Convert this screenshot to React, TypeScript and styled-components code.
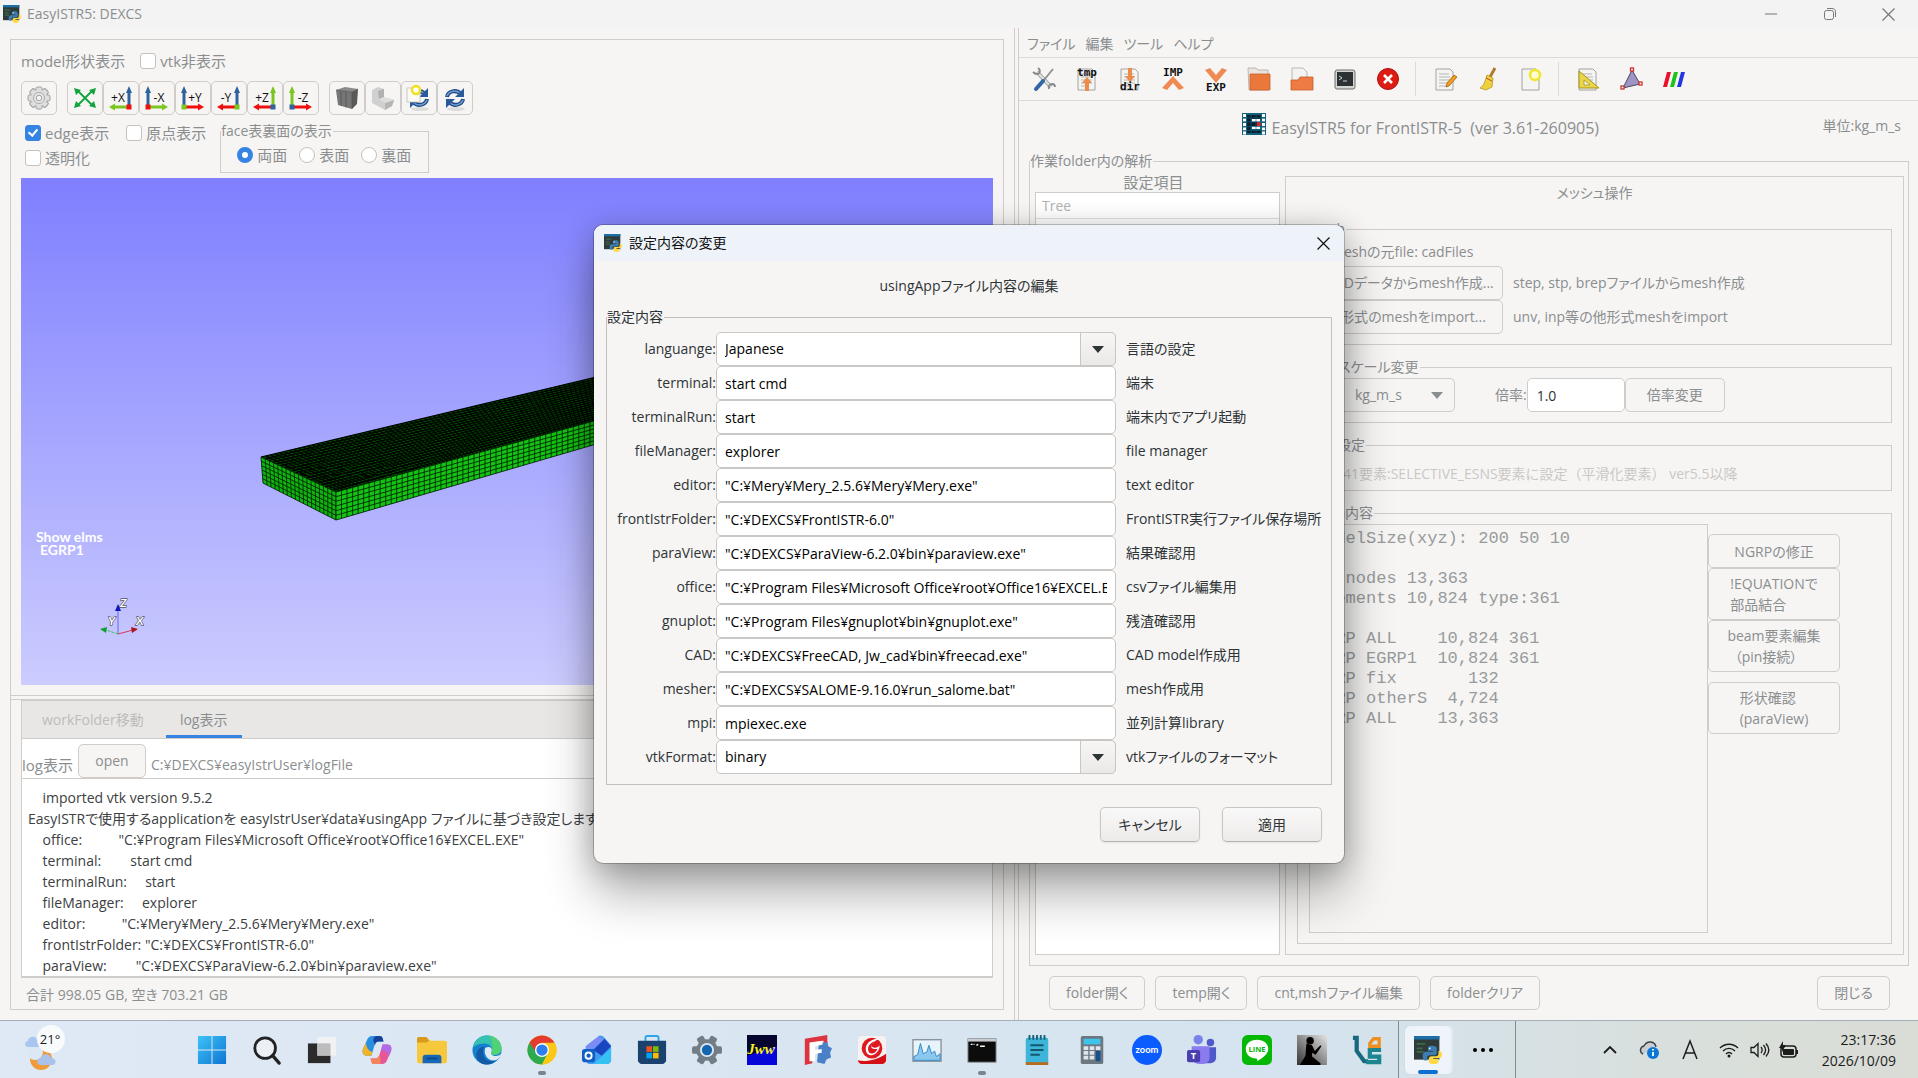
import React from "react";
import styled, { createGlobalStyle, css } from "styled-components";

const line = "#cfccc9";
const muted = "#8b8e8f";
const ink = "#2e3436";

const GlobalStyle = createGlobalStyle`
  *, *::before, *::after { box-sizing: border-box; }
  html, body { margin: 0; }
  body {
    background: #f6f5f4;
    color: ${muted};
    font-family: "Open Sans", "Noto Sans CJK JP", sans-serif;
    font-size: 14px;
    line-height: 20px;
    font-feature-settings: "palt";
    overflow: hidden;
  }
  button, input, select, textarea { font: inherit; color: inherit; font-feature-settings: inherit; }
  svg { display: block; flex: none; overflow: visible; }
`;

/* ---------- window frame ---------- */

const Desktop = styled.div`
  position: relative;
  min-height: 100vh;
  display: flex;
  flex-direction: column;
`;

const TitleBar = styled.header`
  display: flex;
  align-items: center;
  height: 28px;
  padding-left: 3px;
  background: #f3f3f3;
`;

const AppTitle = styled.span`
  flex: 1;
  margin-left: 6px;
`;

const WindowButton = styled.button`
  width: 59px;
  height: 28px;
  padding: 0;
  border: 0;
  background: none;
  display: grid;
  place-items: center;
`;

const Workspace = styled.main`
  flex: 1;
  min-height: 0;
  display: grid;
  grid-template-columns: minmax(0, 1014fr) 5px minmax(0, 899fr);
`;

const Splitter = styled.div`
  border: solid ${line};
  border-width: 0 1px;
`;

const LeftPane = styled.section`
  display: flex;
  padding: 11px 10px 10px;
`;

const ViewerFrame = styled.div`
  flex: 1;
  min-width: 0;
  display: flex;
  flex-direction: column;
  border: 1px solid ${line};
`;

const ViewerTop = styled.div`
  flex: 1;
  display: flex;
  flex-direction: column;
  padding: 11px 10px 10px;
`;

const Row = styled.div`
  display: flex;
  align-items: center;
`;

const ModelRow = styled(Row)`
  gap: 15px;
  font-size: 15px;
`;

const CheckLabel = styled.label`
  display: flex;
  align-items: center;
  gap: 4px;
  font-size: 15px;
  white-space: nowrap;
`;

const Check = styled.input`
  appearance: none;
  position: relative;
  width: 16px;
  height: 16px;
  margin: 0;
  flex: none;
  border: 1px solid #c4c1be;
  border-radius: 3px;
  background: #fff;
  &:checked { background: #3584e4; border-color: #3584e4; }
  &:checked::before {
    content: "";
    position: absolute;
    left: 4px;
    top: 1px;
    width: 6px;
    height: 9px;
    border: solid #fff;
    border-width: 0 2px 2px 0;
    transform: rotate(40deg);
  }
  &:disabled { background: #f6f5f4; }
`;

const Radio = styled(Check)`
  border-radius: 50%;
  &:checked { background: #fff; border: 5px solid #3584e4; }
  &:checked::before { content: none; }
`;

const ToolStrip = styled.div`
  display: flex;
  margin-top: 10px;
`;

const ToolGroup = styled.div`
  display: flex;
  margin-right: 10px;
`;

const ToolButton = styled.button`
  width: 36px;
  height: 34px;
  padding: 0;
  display: grid;
  place-items: center;
  border: 1px solid ${line};
  border-radius: 5px;
  background: #f6f5f4;
`;

const ViewOptions = styled.div`
  display: flex;
  gap: 14px;
  height: 63px;
`;

const CheckGrid = styled.div`
  display: grid;
  grid-template-columns: auto auto;
  grid-auto-rows: 25px;
  align-items: center;
  column-gap: 17px;
  align-content: start;
  padding: 5px 0 0 4px;
`;

const Group = styled.fieldset`
  margin: 0;
  padding: 0;
  min-width: 0;
  border: 1px solid ${line};
`;

const GroupTitle = styled.legend`
  padding: 0 1px 0 0;
  line-height: 20px;
`;

const FaceGroup = styled(Group)`
  width: 209px;
  height: 52px;
  margin-top: 6px;
`;

const FaceChoices = styled.div`
  display: flex;
  gap: 12px;
  padding: 4px 0 0 16px;
`;

const Viewport = styled.div`
  position: relative;
  flex: 1;
  min-height: 200px;
  background: linear-gradient(#7f7fff, #ccccff);
  overflow: hidden;
  & > svg { position: absolute; inset: 0; }
`;

const PaneHandle = styled.div`
  height: 5px;
  border: solid ${line};
  border-width: 1px 0;
`;

const Notebook = styled.div`
  height: 278px;
  margin: 0 10px;
  display: flex;
  flex-direction: column;
  border: 1px solid ${line};
  border-bottom-width: 2px;
  background: #fff;
`;

const Tabs = styled.nav`
  display: flex;
  height: 38px;
  background: #e9e7e6;
  border-bottom: 1px solid ${line};
  padding-left: 8px;
`;

const Tab = styled.button<{ $active?: boolean }>`
  border: 0;
  background: none;
  padding: 3px 12px 0;
  min-width: 76px;
  margin-right: ${(p) => (p.$active ? 0 : 10)}px;
  color: ${(p) => (p.$active ? muted : "#bdbcba")};
  border-bottom: 3px solid ${(p) => (p.$active ? "#3584e4" : "transparent")};
`;

const LogHead = styled.div`
  display: flex;
  align-items: flex-end;
  gap: 5px;
  height: 39px;
`;

const LogText = styled.span`
  line-height: 26px;
`;

const LogLabel = styled(LogText)`
  font-size: 15px;
`;

const button = css`
  height: 34px;
  border: 1px solid ${line};
  border-radius: 5px;
  background: #f6f5f4;
  white-space: nowrap;
`;

const Button = styled.button`
  ${button}
  padding: 0 16px;
`;

const OpenButton = styled(Button)`
  width: 68px;
  padding: 0;
`;

const LogView = styled.pre`
  flex: 1;
  min-height: 0;
  margin: 0;
  border-top: 1px solid ${line};
  padding: 0 6px;
  display: flex;
  flex-direction: column;
  justify-content: flex-end;
  font: inherit;
  line-height: 21px;
  color: #3c4042;
  overflow: hidden;
`;

const Disk = styled.div`
  padding: 7px 15px 3px;
  height: 31px;
`;

/* ---------- right pane ---------- */

const RightPane = styled.section`
  min-width: 0;
  display: flex;
  flex-direction: column;
`;

const MenuBar = styled.nav`
  display: flex;
  gap: 8px;
  height: 30px;
  padding: 3px 7px 0;
  border-bottom: 1px solid #dcdad8;
`;

const MenuButton = styled.button`
  border: 0;
  background: none;
  padding: 0 1px;
`;

const IconBar = styled.div`
  display: flex;
  align-items: center;
  height: 43px;
  padding-left: 3px;
  border-bottom: 1px solid #dcdad8;
`;

const IconButton = styled.button`
  width: 43px;
  height: 40px;
  padding: 0;
  border: 0;
  background: none;
  display: grid;
  place-items: center;
`;

const BarDivider = styled.span`
  width: 1px;
  height: 34px;
  margin: 0 7px 0 6px;
  background: #dcdad8;
`;

const Banner = styled.div`
  display: flex;
  align-items: flex-start;
  height: 50px;
  padding: 12px 17px 0 0;
`;

const BannerTitle = styled.h1`
  flex: 1;
  margin: 0;
  display: flex;
  justify-content: center;
  gap: 5px;
  font-size: 16px;
  font-weight: 500;
  line-height: 30px;
  white-space: pre;
`;

const Unit = styled.span`
  line-height: 26px;
`;

const WorkGroup = styled(Group)`
  flex: 1;
  min-height: 0;
  margin: 0 9px 0 10px;
  display: flex;
  flex-direction: column;
`;

const WorkBody = styled.div`
  flex: 1;
  display: flex;
  gap: 5px;
  padding: 2px 4px 10px 5px;
`;

const TreeColumn = styled.div`
  width: 245px;
  display: flex;
  flex-direction: column;
  text-align: center;
`;

const TreeTitle = styled.span`
  padding-right: 8px;
  font-size: 15px;
  line-height: 19px;
`;

const TreeBox = styled.div`
  flex: 1;
  border: 1px solid ${line};
  background: #fff;
`;

const TreeHead = styled.div`
  padding: 3px 6px 2px;
  text-align: left;
  color: #b3b2b0;
  border-bottom: 1px solid #e2e0de;
`;

const MeshPanel = styled.div`
  flex: 1;
  min-width: 0;
  margin-top: 3px;
  padding: 6px 11px 10px;
  border: 1px solid ${line};
  display: flex;
  flex-direction: column;
  gap: 12px;
`;

const PanelTitle = styled.h2`
  margin: 0 0 4px;
  font-size: 14px;
  font-weight: 400;
  text-align: center;
`;

const MeshSource = styled(Group)`
  padding: 3px 11px 10px;
`;

const SourceLabel = styled.div`
  padding: 0 22px 4px;
`;

const SourceGrid = styled.div`
  display: grid;
  grid-template-columns: 194px 1fr;
  column-gap: 10px;
  align-items: center;
`;

const ScaleGroup = styled(Group)`
  padding: 1px 40px 10px;
`;

const UnitPick = styled.span`
  position: relative;
  margin-right: 40px;
  & > svg { position: absolute; right: 12px; top: 14px; pointer-events: none; }
`;

const UnitSelect = styled.select`
  ${button}
  appearance: none;
  width: 117px;
  padding: 0 16px;
`;

const ScaleInput = styled.input`
  width: 98px;
  height: 34px;
  padding: 0 9px;
  border: 1px solid ${line};
  border-radius: 5px;
  background: #fff;
  color: ${ink};
`;

const ScaleButton = styled(Button)`
  width: 100px;
`;

const ElementGroup = styled(Group)`
  padding: 9px 11px 6px;
`;

const DimLabel = styled(CheckLabel)`
  gap: 10px;
  font-size: 14px;
  font-feature-settings: normal;
  color: #cac8c6;
`;

const ContentGroup = styled(Group)`
  flex: 1;
  padding: 1px 51px 10px 11px;
`;

const ContentBody = styled.div`
  display: flex;
  height: 100%;
`;

const MeshInfo = styled.textarea`
  flex: 1;
  min-width: 0;
  padding: 4px 5px;
  border: 1px solid ${line};
  background: transparent;
  resize: none;
  outline: 0;
  font: 17px/20px "Liberation Mono", monospace;
  color: #989b9c;
`;

const SideButtons = styled.div`
  width: 132px;
  padding-top: 10px;
  display: flex;
  flex-direction: column;
`;

const SideButton = styled.button<{ $tall?: boolean; $spaced?: boolean }>`
  ${button}
  height: ${(p) => (p.$tall ? 52 : 34)}px;
  margin-top: ${(p) => (p.$spaced ? 10 : 0)}px;
  padding: 0;
  line-height: 21px;
  display: grid;
  place-content: center;
  text-align: left;
  white-space: pre;
`;

const Footer = styled.footer`
  display: flex;
  gap: 10px;
  padding: 10px 28px 10px 30px;
`;

const Spacer = styled.span`
  flex: 1;
`;

/* ---------- dialog ---------- */

const Dialog = styled.form`
  position: absolute;
  left: 594px;
  top: 225px;
  width: 750px;
  display: flex;
  flex-direction: column;
  border-radius: 9px;
  background: #f6f5f4;
  color: ${ink};
  box-shadow: 0 0 0 1px rgba(0, 0, 0, 0.22), 0 30px 50px rgba(0, 0, 0, 0.32), 0 4px 28px rgba(0, 0, 0, 0.22);
`;

const DialogBar = styled.div`
  display: flex;
  align-items: center;
  height: 36px;
  padding-left: 10px;
  border-radius: 9px 9px 0 0;
  background: #edf3f9;
  color: #111;
`;

const DialogTitle = styled.span`
  flex: 1;
  margin-left: 7px;
`;

const CloseButton = styled.button`
  width: 42px;
  height: 36px;
  padding: 0;
  border: 0;
  background: none;
  display: grid;
  place-items: center;
`;

const DialogHeading = styled.h2`
  margin: 15px 0 11px;
  font-size: 14px;
  font-weight: 400;
  line-height: 20px;
  text-align: center;
`;

const SettingsGroup = styled(Group)`
  margin: 0 12px;
  padding: 5px 0 10px;
  border-color: #c2bfbc;
`;

const SettingRow = styled.div`
  display: grid;
  grid-template-columns: 109px 400px 1fr;
  align-items: center;
  height: 34px;
`;

const SettingName = styled.label`
  text-align: right;
`;

const field = css`
  width: 100%;
  height: 34px;
  padding: 0 8px;
  border: 1px solid #c9c6c3;
  border-radius: 5px;
  background: #fff;
  color: #000;
`;

const TextField = styled.input`
  ${field}
`;

const Combo = styled.span`
  position: relative;
  display: block;
`;

const ComboSelect = styled.select`
  ${field}
  appearance: none;
`;

const ComboArrow = styled.span`
  position: absolute;
  top: 0;
  right: 0;
  width: 36px;
  height: 34px;
  display: grid;
  place-items: center;
  border: 1px solid #c9c6c3;
  border-radius: 0 5px 5px 0;
  background: linear-gradient(#f7f6f5, #ebe9e8);
  pointer-events: none;
`;

const SettingNote = styled.span`
  padding-left: 10px;
  white-space: nowrap;
`;

const DialogActions = styled.div`
  display: flex;
  justify-content: flex-end;
  gap: 22px;
  padding: 22px 22px 21px;
`;

const ActionButton = styled.button`
  width: 100px;
  height: 35px;
  padding: 0;
  border: 1px solid #c9c6c3;
  border-bottom-color: #b5b2af;
  border-radius: 5px;
  background: linear-gradient(#f9f8f8, #edebea);
  box-shadow: 0 1px 2px rgba(0, 0, 0, 0.08);
`;

/* ---------- taskbar ---------- */

const Taskbar = styled.nav`
  display: flex;
  align-items: stretch;
  height: 58px;
  border-top: 1px solid #a4afb9;
  background: linear-gradient(90deg, #dfe9f5, #d7e5f0 55%, #d4e3ef 68%, #d9dfda 90%, #dadcd6);
  color: #1c1c1c;
`;

const Weather = styled.button`
  width: 184px;
  padding: 0 0 0 24px;
  border: 0;
  background: none;
  text-align: left;
`;

const TaskButton = styled.button<{ $active?: boolean }>`
  position: relative;
  width: 55px;
  padding: 0;
  border: 0;
  background: none;
  display: grid;
  place-items: center;
  ${(p) =>
    p.$active &&
    css`
      width: 46px;
      margin: 5px 0 4px 6px;
      border-radius: 5px;
      background: #eef4fa;
      box-shadow: 2px 0 0 #e2ebf3, 0 0 1px #b8c4ce;
    `}
`;

const RunMark = styled.span<{ $active?: boolean }>`
  position: absolute;
  bottom: ${(p) => (p.$active ? 0 : 3)}px;
  width: ${(p) => (p.$active ? 20 : 8)}px;
  height: 4px;
  border-radius: 2px;
  background: ${(p) => (p.$active ? "#0f6fd0" : "#7d858c")};
`;

const TaskDivider = styled.span`
  width: 1px;
  background: #7f8b95;
`;

const RunningApps = styled.div`
  display: flex;
  margin-left: 4px;
`;

const TrayButton = styled.button<{ $w: number }>`
  width: ${(p) => p.$w}px;
  padding: 0;
  border: 0;
  background: none;
  display: grid;
  place-items: center;
`;

const Clock = styled.time`
  width: 112px;
  padding: 8px 22px 0 0;
  text-align: right;
  line-height: 21px;
`;

/* ---------- drawings ---------- */

const PythonIcon = ({ size = 18 }: { size?: number }) => (
  <svg width={size} height={size} viewBox="0 0 32 32">
    <rect width="29" height="27" fill="#2f3b3b" />
    <rect width="29" height="4" fill="#1d6fa5" />
    <path d="M3 9h10M3 14h7M3 18h8" stroke="#3d6a46" strokeWidth="2" />
    <path d="M20 11c-3 0-4 1-4 3v3h6v1h-8c-3 0-4 2-4 5s1 5 3 5h2v-3c0-2 1-3 3-3h5c2 0 3-1 3-3v-5c0-2-2-3-6-3z" fill="#3d7db3" />
    <path d="M23 32c3 0 5-1 5-3v-3h-6v-1h7c2 0 3-2 3-4s-1-4-3-4h-1v3c0 2-1 3-3 3h-5c-2 0-3 1-3 3v3c0 2 2 3 6 3z" fill="#ffd845" />
    <circle cx="18" cy="14" r="1" fill="#fff" />
  </svg>
);

const GearIcon = () => (
  <svg width="26" height="28" viewBox="0 0 26 28">
    <g fill="#dedede" stroke="#9d9d9d">
      {[0, 45, 90, 135].map((a) => (
        <rect key={a} x="10" y="3" width="6" height="22" rx="1.500" transform={`rotate(${a} 13 14)`} />
      ))}
    </g>
    <circle cx="13" cy="14" r="8.300" fill="#dedede" />
    <circle cx="13" cy="14" r="5.500" fill="#e9e9e9" stroke="#aaa" />
    <circle cx="13" cy="14" r="2.800" fill="#f6f5f4" stroke="#9d9d9d" />
  </svg>
);

const FitIcon = () => (
  <svg width="26" height="26" viewBox="0 0 26 26">
    <path d="M5 5l16 16M21 5L5 21" stroke="#12a33c" strokeWidth="1.800" />
    <path d="M2 3l7 2-5 5zM24 3l-7 2 5 5zM2 23l7-2-5-5zM24 23l-7-2 5-5z" fill="#12a33c" />
  </svg>
);

type Axis = { label: string; right: boolean; v: string; h: string; dot: string };
const blue = "#2f639b";
const lime = "#7ac61e";
const red = "#ee0f0f";

const AxisIcon = ({ label, right, v, h, dot }: Axis) => {
  const cx = right ? 22 : 5;
  const tip = right ? 2 : 25;
  const back = right ? 8 : 19;
  return (
    <svg width="28" height="28" viewBox="0 0 28 28">
      <path d={`M${cx} 23V8`} stroke={v} strokeWidth="3" />
      <path d={`M${cx - 3} 9L${cx} 2l3 7z`} fill={v} />
      <path d={`M${cx} 23H${back}`} stroke={h} strokeWidth="3" />
      <path d={`M${back} 19.500L${tip} 23l${back - tip} 3.500z`} fill={h} />
      <rect x={cx - 2.5} y="20.500" width="5" height="5" fill={dot} />
      <text x={right ? 11 : 16} y="18" textAnchor="middle" fontSize="12" fill="#111">
        {label}
      </text>
    </svg>
  );
};

const axes: Axis[] = [
  { label: "+X", right: true, v: blue, h: lime, dot: red },
  { label: "-X", right: false, v: blue, h: lime, dot: red },
  { label: "+Y", right: false, v: blue, h: red, dot: lime },
  { label: "-Y", right: true, v: blue, h: red, dot: lime },
  { label: "+Z", right: true, v: lime, h: red, dot: blue },
  { label: "-Z", right: false, v: lime, h: red, dot: blue },
];

const CubeIcon = () => (
  <svg width="26" height="26" viewBox="0 0 26 26">
    <path d="M2 5l9-3 13 2-6 3z" fill="#8a8a8a" />
    <path d="M2 5l16 2v17L4 20z" fill="#767676" />
    <path d="M18 7l6-3-1 15-5 5z" fill="#5a5a5a" />
    <path d="M2 5l16 2v17M18 7l6-3M7 6v15M12 6.500v16" stroke="#4a4a4a" strokeWidth=".6" fill="none" />
  </svg>
);

const CutIcon = () => (
  <svg width="26" height="26" viewBox="0 0 26 26">
    <path d="M2 5l6-3 6 2v8l10 3-2 6-7 4L2 18z" fill="#d0d0d0" />
    <path d="M8 6l6-2v8l-5 2z" fill="#b0b0b0" />
    <path d="M15 18l9-3-2 6-7 4z" fill="#b5b5b5" />
    <path d="M9 14l5-2 10 3-9 3z" fill="#dedede" />
  </svg>
);

const ReloadIcon = ({ fresh }: { fresh?: boolean }) => (
  <svg width="26" height="26" viewBox="0 0 26 26">
    <ellipse cx="14" cy="24" rx="9" ry="2" fill="#ddd" />
    <g fill="none" stroke="#204a87" strokeWidth="4">
      <path d="M5 12c1-6 9-8 14-3" />
      <path d="M21 14c-1 6-9 8-14 3" />
    </g>
    <g fill="none" stroke="#6f9dd1" strokeWidth="1.500">
      <path d="M5 11c2-5 9-7 14-2" />
      <path d="M21 15c-2 5-9 7-14 2" />
    </g>
    <path d="M22 3v9h-9zM4 23v-9h9z" fill="#2a5a9a" />
    {fresh && (
      <>
        <path d="M1 3h13v14H1z" fill="#fbfbf4" stroke="#bbb" strokeWidth=".8" />
        <circle cx="10" cy="5" r="4" fill="#fff" stroke="#f0e01a" strokeWidth="2.500" />
      </>
    )}
  </svg>
);

const Sheet = ({ lines = true }: { lines?: boolean }) => (
  <>
    <path d="M3 2h14l3 3v18H3z" fill="#f4f4f2" stroke="#9a9a96" strokeWidth=".9" />
    {lines && <path d="M6 7h10M6 10h11M6 13h11M6 16h11M6 19h8" stroke="#b5b5b1" />}
  </>
);

const MonoTag = ({ y, children }: { y: number; children: string }) => (
  <text x="12" y={y} textAnchor="middle" fontSize="11" fontWeight="700" fontFamily="DejaVu Sans Mono, monospace" fill="#111">
    {children}
  </text>
);

const toolbar: { name: string; art: React.ReactNode }[][] = [
  [
    {
      name: "設定",
      art: (
        <>
          <path d="M5 5l14 15" stroke="#9b9e9c" strokeWidth="4" />
          <path d="M5 5l14 15" stroke="#e4e6e4" strokeWidth="2" />
          <path d="M6 1c3 2 2 6-1 6-2 0-3-1-4-2M17 22c-1-3 1-5 3-5s3 1 3 3" stroke="#85888a" strokeWidth="1.800" fill="none" />
          <path d="M21 2l-9 11" stroke="#8a8d8a" strokeWidth="1.800" />
          <path d="M11 14l-7 8" stroke="#3465a4" strokeWidth="4" strokeLinecap="round" />
        </>
      ),
    },
    {
      name: "temp",
      art: (
        <>
          <Sheet />
          <path d="M12 10l5 6h-3v8h-4v-8H7z" fill="#ee8a4a" />
          <MonoTag y={9}>tmp</MonoTag>
        </>
      ),
    },
    {
      name: "dir",
      art: (
        <>
          <Sheet />
          <path d="M12 15l5-6h-3V1h-4v8H7z" fill="#ee8a4a" />
          <MonoTag y={23}>dir</MonoTag>
        </>
      ),
    },
    {
      name: "import",
      art: (
        <>
          <path d="M1 21L12 9l11 12-5 2-6-7-6 7z" fill="#f08a55" />
          <MonoTag y={9}>IMP</MonoTag>
        </>
      ),
    },
    {
      name: "export",
      art: (
        <>
          <path d="M1 3l5-2 6 7 6-7 5 2-11 13z" fill="#f08a55" />
          <MonoTag y={24}>EXP</MonoTag>
        </>
      ),
    },
    {
      name: "folder",
      art: (
        <>
          <path d="M1 1h8l2 2h10v20H2z" fill="#e9e4df" stroke="#b5a79b" strokeWidth=".8" />
          <path d="M3 7h20v16H3z" fill="#e9783a" stroke="#c4602c" strokeWidth=".8" />
        </>
      ),
    },
    {
      name: "folder-doc",
      art: (
        <>
          <path d="M2 1h11l4 4v11H2z" fill="#f3f3f1" stroke="#a8a8a4" strokeWidth=".8" />
          <path d="M1 23V13h7l2-3h13v13z" fill="#ee7a44" stroke="#c4602c" strokeWidth=".8" />
        </>
      ),
    },
    {
      name: "terminal",
      art: (
        <>
          <rect x="2" y="3" width="20" height="19" rx="2" fill="#d3d7cf" stroke="#6d6f6b" />
          <rect x="4" y="5" width="16" height="14" fill="#2c3133" />
          <path d="M6 9l3 2-3 2M10 14h4" stroke="#cfd4d0" fill="none" />
        </>
      ),
    },
    {
      name: "stop",
      art: (
        <>
          <circle cx="12" cy="12" r="10.500" fill="#dd1c14" stroke="#b00f0a" />
          <path d="M8 8l8 8M16 8l-8 8" stroke="#fff" strokeWidth="2.600" />
        </>
      ),
    },
  ],
  [
    {
      name: "edit",
      art: (
        <>
          <Sheet />
          <path d="M21 8l3 2-8 9-3 1 1-4z" fill="#f59a1e" stroke="#9c6412" strokeWidth=".8" />
        </>
      ),
    },
    {
      name: "clear",
      art: (
        <>
          <path d="M19 1l-5 9" stroke="#b07a2c" strokeWidth="3" />
          <path d="M11 8l6 3-1 9-6 3-6-2c4-2 5-7 7-13z" fill="#ecd03f" stroke="#b89a1c" strokeWidth=".8" />
          <path d="M10 11l6 3" stroke="#b94a3a" />
        </>
      ),
    },
    {
      name: "new",
      art: (
        <>
          <Sheet lines={false} />
          <circle cx="16" cy="8" r="5" fill="#fdfbd0" stroke="#f0e62c" strokeWidth="2.500" />
        </>
      ),
    },
  ],
  [
    {
      name: "measure",
      art: (
        <>
          <Sheet />
          <path d="M3 4l20 17H3z" fill="#e9d54a" stroke="#a8941c" />
          <path d="M8 13l6 5H8z" fill="#f6f5f4" stroke="#a8941c" strokeWidth=".8" />
        </>
      ),
    },
    {
      name: "triangle",
      art: (
        <>
          <path d="M13 3L4 21l17-4z" fill="#9d96c4" stroke="#4b4868" />
          <g fill="#fff" stroke="#c8322a" strokeWidth="1.300">
            <rect x="11.500" y="1" width="3" height="3" />
            <rect x="2" y="19" width="3" height="3" />
            <rect x="20" y="15" width="3" height="3" />
          </g>
        </>
      ),
    },
    {
      name: "paraview",
      art: (
        <>
          <path d="M5 5h4L5 20H1z" fill="#e8122a" />
          <path d="M12 5h4l-4 15H8z" fill="#1fc31f" />
          <path d="M19 5h4l-4 15h-4z" fill="#2438e0" />
        </>
      ),
    },
  ],
];

const LogoIcon = () => (
  <svg width="24" height="22" viewBox="0 0 24 22">
    <rect width="24" height="22" fill="#12627e" />
    <path d="M5 2h14v4H9v3h9v4H9v4h10v3H5z" fill="#0c2130" />
    <g fill="#fff">
      {[1, 5.5, 10, 14.5, 18.5].map((y) => (
        <React.Fragment key={y}>
          <rect x="1" y={y} width="3" height="3" />
          <rect x="20" y={y} width="3" height="3" />
        </React.Fragment>
      ))}
      <rect x="10" y="6" width="8" height="2.500" />
      <rect x="10" y="13.500" width="8" height="2.500" />
    </g>
    <rect x="15" y="9" width="4" height="4" fill="#e02020" />
    <path d="M0 5h24M0 9h24M0 13.500h24M0 17.500h24M4.500 0v22M9 0v22M14 0v22M19 0v22" stroke="#12627e" strokeWidth=".6" />
  </svg>
);

const Arrow = ({ fill = ink }: { fill?: string }) => (
  <svg width="12" height="7" viewBox="0 0 12 7">
    <path d="M0 0h12L6 7z" fill={fill} />
  </svg>
);

const CrossIcon = ({ color }: { color: string }) => (
  <svg width="13" height="13" viewBox="0 0 13 13">
    <path d="M.5.5l12 12M12.500.5l-12 12" stroke={color} strokeWidth="1.200" />
  </svg>
);

/* The solid is drawn from its near end face; each face is ruled with its mesh. */
type P = [number, number];
const mix = (a: P, b: P, t: number): P => [a[0] + (b[0] - a[0]) * t, a[1] + (b[1] - a[1]) * t];
const grid = (a: P, b: P, c: P, d: P, n: number, m: number) => {
  let path = "";
  for (let i = 0; i <= n; i++) {
    const p = mix(a, b, i / n);
    const q = mix(d, c, i / n);
    path += `M${p[0].toFixed(1)} ${p[1].toFixed(1)}L${q[0].toFixed(1)} ${q[1].toFixed(1)}`;
  }
  for (let j = 0; j <= m; j++) {
    const p = mix(a, d, j / m);
    const q = mix(b, c, j / m);
    path += `M${p[0].toFixed(1)} ${p[1].toFixed(1)}L${q[0].toFixed(1)} ${q[1].toFixed(1)}`;
  }
  return path;
};
const poly = (...pts: P[]) => pts.map((p) => p.join(",")).join(" ");
const lt: P = [240, 279];
const ft: P = [315, 314];
const fb: P = [315, 342];
const lb: P = [242, 305];
const bt: P = [613, 190];
const rt: P = [613, 232];
const rb: P = [613, 255];

const ModelView = () => (
  <svg width="100%" height="100%">
    <polygon points={poly(lt, ft, rt, bt)} fill="#004a00" />
    <path d={grid(lt, ft, rt, bt, 20, 80)} stroke="#000" strokeWidth="1.200" />
    <polygon points={poly(lt, ft, fb, lb)} fill="#10b410" />
    <path d={grid(lt, ft, fb, lb, 18, 6)} stroke="#032803" strokeWidth=".9" />
    <polygon points={poly(ft, rt, rb, fb)} fill="#14c414" />
    <path d={grid(ft, rt, rb, fb, 54, 6)} stroke="#032803" strokeWidth=".9" />
    <g fill="#fff" fontFamily="Lato, sans-serif" fontWeight="700" fontSize="14">
      <text x="15" y="364">Show elms</text>
      <text x="19" y="377">EGRP1</text>
    </g>
    <path d="M97 456V432" stroke="#6a6ae8" />
    <path d="M97 426l-3 7h6z" fill="#1212c8" />
    <path d="M97 456l15-4" stroke="#d83a5a" />
    <path d="M117 451l-7-2 1 6z" fill="#b01020" />
    <path d="M97 456l-12-4" stroke="#3ac85a" strokeDasharray="3 1" />
    <path d="M79 451l7-2-1 6z" fill="#10a030" />
    <g fontFamily="Lato, sans-serif" fontWeight="700" fontStyle="italic" fontSize="12" fill="#fff" stroke="#222" strokeWidth="1" paintOrder="stroke">
      <text x="99" y="429">Z</text>
      <text x="87" y="447">Y</text>
      <text x="115" y="447">X</text>
    </g>
  </svg>
);

const Glyph = ({ children, size = 30 }: { children: React.ReactNode; size?: number }) => (
  <svg width={size} height={size} viewBox="0 0 32 32">
    {children}
  </svg>
);

const tasks: { name: string; run?: boolean; art: React.ReactNode }[] = [
  {
    name: "スタート",
    art: (
      <>
        <defs>
          <linearGradient id="win" x1="0" y1="0" x2="1" y2="1">
            <stop offset="0" stopColor="#3cc4f6" />
            <stop offset="1" stopColor="#0f74d4" />
          </linearGradient>
        </defs>
        <path d="M1 1h14.500v14.500H1zM16.500 1H31v14.500H16.500zM1 16.500h14.500V31H1zM16.500 16.500H31V31H16.500z" fill="url(#win)" />
      </>
    ),
  },
  {
    name: "検索",
    art: (
      <>
        <circle cx="14" cy="14" r="11" fill="#eaf0f5" stroke="#222" strokeWidth="3" />
        <path d="M22 22l7 8" stroke="#222" strokeWidth="3.500" strokeLinecap="round" />
      </>
    ),
  },
  {
    name: "タスクビュー",
    art: (
      <>
        <path d="M1 9h24v21H1z" fill="#2b2b2b" />
        <path d="M11 2h20v20H11z" fill="#f3f3f3" opacity=".88" />
        <path d="M11 9h14v13H11z" fill="#bdbdbd" />
      </>
    ),
  },
  {
    name: "Copilot",
    art: (
      <>
        <path d="M11 1h8c3 0 3 3 4 6h-5c-3 0-4 2-5 5l-3 10H5c-4 0-5-3-4-7l4-9c1-3 3-5 6-5z" fill="#2a8fe0" />
        <path d="M19 1c3 0 3 3 4 6h-5c-3 0-4 2-4 4L12 6c0-3 2-5 4-5z" fill="#173f9c" />
        <path d="M1 15l3-7c1 6 3 9 7 10l-1 4H5c-4 0-5-3-4-7z" fill="#f0b429" />
        <path d="M21 31h-8c-3 0-3-3-4-6h5c3 0 4-2 5-5l3-10h5c4 0 5 3 4 7l-4 9c-1 3-3 5-6 5z" fill="#e8569a" />
        <path d="M22 10h5c4 0 5 3 4 7l-2 5c-3-6-6-6-9-5z" fill="#b06be8" />
        <path d="M9 25h5c3 0 4-2 5-5l1 11h-7c-3 0-3-3-4-6z" fill="#f4845a" />
      </>
    ),
  },
  {
    name: "エクスプローラー",
    art: (
      <>
        <path d="M0 4c0-1 1-2 2-2h8l4 4h16c1 0 2 1 2 2v20c0 1-1 2-2 2H2c-1 0-2-1-2-2z" fill="#f8c83c" />
        <path d="M0 4c0-1 1-2 2-2h8l3 4-3 2H0z" fill="#d89a1c" />
        <path d="M6 30v-6c0-2 1-3 3-3h14c2 0 3 1 3 3v6z" fill="#1667b5" />
        <path d="M10 25h12" stroke="#0d4a8a" strokeWidth="2" />
      </>
    ),
  },
  {
    name: "Edge",
    art: (
      <>
        <circle cx="16" cy="16" r="15.500" fill="#1680d0" />
        <path d="M1 13C3 5 9 0 17 .500 26 1 32 8 31.500 15c-.5 5-5 7-9 6-3-1-2-3-1-5 0-4-4-7-8-7-5 0-9 1-12 4z" fill="#35c2b0" />
        <path d="M17 .500C26 1 32 8 31.500 15c-.5 5-5 7-9 6-3-1-2-3-1-5C23 9 21 3 17 .500z" fill="#5cd95c" opacity=".7" />
        <path d="M12 19c0 7 6 11 14 8-4 5-12 6-18 2C2 23 4 14 13 12c-1 2-1 4-1 7z" fill="#125aa5" />
        <path d="M14 14c4-3 8 0 7 3-1 2-1 4 2 5 3 1 6 0 8-2 0 3-3 6-6 7-8 1-13-6-11-13z" fill="#dfeaf4" />
      </>
    ),
  },
  {
    name: "Chrome",
    run: true,
    art: (
      <>
        <circle cx="16" cy="16" r="15.500" fill="#f9c513" />
        <path d="M2.600 8.200A15.500 15.500 0 0 1 29.400 8.200L16 9l-6.500 11z" fill="#e33b2e" />
        <path d="M2.600 8.200A15.500 15.500 0 0 0 16 31.500L22 20l-12-1z" fill="#2da94f" />
        <path d="M16 31.500A15.500 15.500 0 0 0 29.400 8.200H16l6 12z" fill="#fbc816" />
        <circle cx="16" cy="16" r="7.500" fill="#fff" />
        <circle cx="16" cy="16" r="6" fill="#2d7ff0" />
      </>
    ),
  },
  {
    name: "Outlook",
    art: (
      <>
        <path d="M4 12L18 1c2-1 4 0 6 2l7 8v16c0 2-2 4-4 4H8c-2 0-4-2-4-4z" fill="#3f9cf2" />
        <path d="M4 12L18 1l5 4L8 18z" fill="#7d8cf5" />
        <path d="M12 16L24 4l7 8-10 10z" fill="#1a45c0" />
        <path d="M31 14v13c0 2-2 4-4 4H12z" fill="#35c1f4" />
        <rect y="15" width="14" height="14" rx="3" fill="#0f5fc4" />
        <circle cx="7" cy="22" r="3.300" fill="none" stroke="#fff" strokeWidth="2" />
      </>
    ),
  },
  {
    name: "Store",
    art: (
      <>
        <path d="M9 8V3c0-1 1-2 2-2h10c1 0 2 1 2 2v5" fill="none" stroke="#2ba5e8" strokeWidth="2" />
        <path d="M1 6h30v21c0 2-2 4-4 4H5c-2 0-4-2-4-4z" fill="#1b426e" />
        <path d="M10 12h6v6h-6z" fill="#f25022" />
        <path d="M17 12h6v6h-6z" fill="#7fba00" />
        <path d="M10 19h6v6h-6z" fill="#00a4ef" />
        <path d="M17 19h6v6h-6z" fill="#ffb900" />
      </>
    ),
  },
  {
    name: "設定",
    art: (
      <>
        {[30, 90, 150].map((a) => (
          <rect key={a} x="12" y="0" width="8" height="32" rx="2" fill="#737d87" transform={`rotate(${a} 16 16)`} />
        ))}
        <circle cx="16" cy="16" r="11.500" fill="#737d87" />
        <circle cx="16" cy="16" r="7.500" fill="#dfe8f0" />
        <circle cx="16" cy="16" r="5.500" fill="#1267b0" />
      </>
    ),
  },
  {
    name: "Jww",
    art: (
      <>
        <rect width="32" height="32" fill="#0606d8" />
        <path d="M0 0h32v12L0 22z" fill="#050530" />
        <text x="15" y="20" textAnchor="middle" fontSize="16" fontWeight="700" fontStyle="italic" fontFamily="Liberation Serif, serif" fill="#f6f01c">
          Jww
        </text>
      </>
    ),
  },
  {
    name: "FreeCAD",
    art: (
      <>
        <path d="M18 9l9-2 1 5 4 2-2 5 1 5-5 2-2 5-8-2z" fill="#4a80c8" />
        <path d="M3 4l24-4v8h-4V6L11 8v22l-8 2z" fill="#dd3540" />
        <path d="M8 8l14-2v4l-8 2v4l7-1v4l-7 1v8H8z" fill="#fff" />
      </>
    ),
  },
  {
    name: "ウイルスバスター",
    art: (
      <>
        <rect x="1" y="1" width="30" height="30" rx="4" fill="#f6f2f1" />
        <path d="M1 27c8 2 20 0 30-7v7c0 2-2 4-4 4H5c-2 0-4-2-4-4z" fill="#d40f16" />
        <circle cx="16" cy="14" r="11" fill="#dc1a20" />
        <path d="M11 20C6 11 14 3 25 4c-8 2-12 8-8 9 5 2 7-2 7-2 1 6-7 14-13 9z" fill="#fff" />
        <path d="M13 19c-3-5 0-10 5-12-3 4-4 7 0 8 2 0 4 0 4-1-1 4-5 7-9 5z" fill="#dc1a20" />
      </>
    ),
  },
  {
    name: "モニター",
    art: (
      <>
        <rect x="1" y="5" width="30" height="23" fill="#e8f4fc" stroke="#8d959c" strokeWidth="1.500" />
        <path d="M2 23l4-2 3-12 3 11 4-2 2-7 3 9 3-3 2 6 4-3v7H2z" fill="#8cc8ee" stroke="#2f86c4" />
      </>
    ),
  },
  {
    name: "cmd",
    run: true,
    art: (
      <>
        <rect x="1" y="4" width="30" height="25" fill="#0c0c0c" stroke="#8a8f94" />
        <rect x="1" y="4" width="30" height="3" fill="#c8ccd0" />
        <path d="M4 10h2M7 10h1M10 11l2-1M14 12h5" stroke="#fff" strokeWidth="1.500" />
      </>
    ),
  },
  {
    name: "メモ帳",
    art: (
      <>
        <rect x="4" y="3" width="24" height="28" rx="2" fill="#3db4d8" />
        <path d="M4 29h24v3H4z" fill="#b96a1c" />
        <path d="M9 11h14M9 16h14M9 21h10" stroke="#12586e" strokeWidth="2.200" />
        <path d="M8 0v5M12 0v5M16 0v5M20 0v5M24 0v5" stroke="#155f78" strokeWidth="2" />
      </>
    ),
  },
  {
    name: "電卓",
    art: (
      <>
        <rect x="4" y="1" width="24" height="30" rx="2" fill="#6d7780" />
        <rect x="7" y="4" width="18" height="6" fill="#3ec3ea" />
        {[12, 17, 22].map((y) => (
          <path key={y} d={`M7 ${y}h5v4H7zM13.500 ${y}h5v4h-5z`} fill="#dfe5ea" />
        ))}
        <path d="M20 12h5v4h-5z" fill="#dfe5ea" />
        <path d="M20 17h5v11h-5z" fill="#17508c" />
      </>
    ),
  },
  {
    name: "zoom",
    art: (
      <>
        <circle cx="16" cy="16" r="16" fill="#0b5cff" />
        <text x="16" y="19" textAnchor="middle" fontSize="10" fontWeight="700" fontFamily="Lato, sans-serif" fill="#fff">
          zoom
        </text>
      </>
    ),
  },
  {
    name: "Teams",
    art: (
      <>
        <circle cx="12" cy="5" r="5" fill="#7b83eb" />
        <circle cx="25" cy="8" r="4" fill="#5059c9" />
        <path d="M18 13h13v11c0 4-3 6-6 6h-7z" fill="#5059c9" />
        <path d="M5 12h19v12c0 5-4 7-9 7s-10-2-10-7z" fill="#8b7bf0" />
        <rect y="16" width="14" height="13" rx="2" fill="#4a3fb0" />
        <text x="7" y="26" textAnchor="middle" fontSize="10" fontWeight="700" fill="#fff">
          T
        </text>
      </>
    ),
  },
  {
    name: "LINE",
    art: (
      <>
        <rect width="32" height="32" rx="6" fill="#06b806" />
        <path d="M16 5c7 0 12 4 12 10 0 5-6 10-12 13 1-2 0-3-1-3C9 25 4 21 4 15S9 5 16 5z" fill="#fff" />
        <text x="16" y="18" textAnchor="middle" fontSize="8" fontWeight="700" fill="#06b806">
          LINE
        </text>
      </>
    ),
  },
  {
    name: "リーダー",
    art: (
      <>
        <defs>
          <linearGradient id="read" x1="0" y1="1" x2="1" y2="0">
            <stop offset="0" stopColor="#333" />
            <stop offset="1" stopColor="#e4e4e4" />
          </linearGradient>
        </defs>
        <rect width="32" height="32" fill="url(#read)" />
        <circle cx="14" cy="6" r="4" fill="#000" />
        <path d="M10 9l6 2 3 6 6-6 1 1-6 9-4-2v4l9 7v2H3l6-10z" fill="#000" />
      </>
    ),
  },
  {
    name: "VB",
    art: (
      <g fill="none" strokeWidth="4.500">
        <path d="M1 3h4v14l8 11h4" stroke="#16697f" />
        <path d="M31 16H19v7h10v6H15" stroke="#1d8590" />
        <path d="M19 14V9l4-5h6v8H19" stroke="#f09020" strokeWidth="3.500" />
      </g>
    ),
  },
];

/* ---------- content ---------- */

const logLines = [
  "    imported vtk version 9.5.2",
  "EasyISTRで使用するapplicationを easyIstrUser¥data¥usingApp ファイルに基づき設定します。",
  '    office:          "C:¥Program Files¥Microsoft Office¥root¥Office16¥EXCEL.EXE"',
  "    terminal:        start cmd",
  "    terminalRun:     start",
  "    fileManager:     explorer",
  '    editor:          "C:¥Mery¥Mery_2.5.6¥Mery¥Mery.exe"',
  '    frontIstrFolder: "C:¥DEXCS¥FrontISTR-6.0"',
  '    paraView:        "C:¥DEXCS¥ParaView-6.2.0¥bin¥paraview.exe"',
];

const meshInfo = `modelSize(xyz): 200 50 10

   nodes 13,363
elements 10,824 type:361

EGRP ALL    10,824 361
EGRP EGRP1  10,824 361
NGRP fix       132
NGRP otherS  4,724
NGRP ALL    13,363`;

const settings: { id: string; value: string; note: string; combo?: boolean }[] = [
  { id: "languange", value: "Japanese", note: "言語の設定", combo: true },
  { id: "terminal", value: "start cmd", note: "端末" },
  { id: "terminalRun", value: "start", note: "端末内でアプリ起動" },
  { id: "fileManager", value: "explorer", note: "file manager" },
  { id: "editor", value: '"C:¥Mery¥Mery_2.5.6¥Mery¥Mery.exe"', note: "text editor" },
  { id: "frontIstrFolder", value: '"C:¥DEXCS¥FrontISTR-6.0"', note: "FrontISTR実行ファイル保存場所" },
  { id: "paraView", value: '"C:¥DEXCS¥ParaView-6.2.0¥bin¥paraview.exe"', note: "結果確認用" },
  { id: "office", value: '"C:¥Program Files¥Microsoft Office¥root¥Office16¥EXCEL.EXE"', note: "csvファイル編集用" },
  { id: "gnuplot", value: '"C:¥Program Files¥gnuplot¥bin¥gnuplot.exe"', note: "残渣確認用" },
  { id: "CAD", value: '"C:¥DEXCS¥FreeCAD, Jw_cad¥bin¥freecad.exe"', note: "CAD model作成用" },
  { id: "mesher", value: '"C:¥DEXCS¥SALOME-9.16.0¥run_salome.bat"', note: "mesh作成用" },
  { id: "mpi", value: "mpiexec.exe", note: "並列計算library" },
  { id: "vtkFormat", value: "binary", note: "vtkファイルのフォーマット", combo: true },
];

const Viewer = () => (
  <LeftPane>
    <ViewerFrame>
      <ViewerTop>
        <ModelRow>
          <span>model形状表示</span>
          <CheckLabel>
            <Check type="checkbox" />
            vtk非表示
          </CheckLabel>
        </ModelRow>
        <ToolStrip>
          <ToolGroup>
            <ToolButton aria-label="設定"><GearIcon /></ToolButton>
          </ToolGroup>
          <ToolGroup>
            <ToolButton aria-label="全体表示"><FitIcon /></ToolButton>
            {axes.map((a) => (
              <ToolButton key={a.label} aria-label={a.label}><AxisIcon {...a} /></ToolButton>
            ))}
          </ToolGroup>
          <ToolGroup>
            <ToolButton aria-label="立体"><CubeIcon /></ToolButton>
            <ToolButton aria-label="断面"><CutIcon /></ToolButton>
            <ToolButton aria-label="新規読込"><ReloadIcon fresh /></ToolButton>
            <ToolButton aria-label="再読込"><ReloadIcon /></ToolButton>
          </ToolGroup>
        </ToolStrip>
        <ViewOptions>
          <CheckGrid>
            <CheckLabel><Check type="checkbox" defaultChecked />edge表示</CheckLabel>
            <CheckLabel><Check type="checkbox" />原点表示</CheckLabel>
            <CheckLabel><Check type="checkbox" />透明化</CheckLabel>
          </CheckGrid>
          <FaceGroup>
            <GroupTitle>face表裏面の表示</GroupTitle>
            <FaceChoices>
              <CheckLabel><Radio type="radio" name="face" defaultChecked />両面</CheckLabel>
              <CheckLabel><Radio type="radio" name="face" />表面</CheckLabel>
              <CheckLabel><Radio type="radio" name="face" />裏面</CheckLabel>
            </FaceChoices>
          </FaceGroup>
        </ViewOptions>
        <Viewport><ModelView /></Viewport>
      </ViewerTop>
      <PaneHandle />
      <Notebook>
        <Tabs>
          <Tab type="button">workFolder移動</Tab>
          <Tab type="button" $active>log表示</Tab>
        </Tabs>
        <LogHead>
          <LogLabel>log表示</LogLabel>
          <OpenButton type="button">open</OpenButton>
          <LogText>C:¥DEXCS¥easyIstrUser¥logFile</LogText>
        </LogHead>
        <LogView>
          {logLines.map((l) => (
            <div key={l}>{l}</div>
          ))}
        </LogView>
      </Notebook>
      <Disk>合計 998.05 GB, 空き 703.21 GB</Disk>
    </ViewerFrame>
  </LeftPane>
);

const Analysis = () => (
  <RightPane>
    <MenuBar>
      {["ファイル", "編集", "ツール", "ヘルプ"].map((m) => (
        <MenuButton key={m}>{m}</MenuButton>
      ))}
    </MenuBar>
    <IconBar>
      {toolbar.map((group, i) => (
        <React.Fragment key={i}>
          {i > 0 && <BarDivider />}
          {group.map((t) => (
            <IconButton key={t.name} aria-label={t.name}>
              <svg width="24" height="24" viewBox="0 0 24 24">{t.art}</svg>
            </IconButton>
          ))}
        </React.Fragment>
      ))}
    </IconBar>
    <Banner>
      <BannerTitle><LogoIcon />{"EasyISTR5 for FrontISTR-5  (ver 3.61-260905)"}</BannerTitle>
      <Unit>単位:kg_m_s</Unit>
    </Banner>
    <WorkGroup>
      <GroupTitle>作業folder内の解析</GroupTitle>
      <WorkBody>
        <TreeColumn>
          <TreeTitle>設定項目</TreeTitle>
          <TreeBox><TreeHead>Tree</TreeHead></TreeBox>
        </TreeColumn>
        <MeshPanel>
          <PanelTitle>メッシュ操作</PanelTitle>
          <MeshSource>
            <GroupTitle>mesh</GroupTitle>
            <SourceLabel>meshの元file: cadFiles</SourceLabel>
            <SourceGrid>
              <Button>CADデータからmesh作成...</Button>
              <span>step, stp, brepファイルからmesh作成</span>
              <Button>他形式のmeshをimport...</Button>
              <span>unv, inp等の他形式meshをimport</span>
            </SourceGrid>
          </MeshSource>
          <ScaleGroup>
            <GroupTitle>スケール変更</GroupTitle>
            <Row>
              <UnitPick>
                <UnitSelect aria-label="単位"><option>kg_m_s</option></UnitSelect>
                <Arrow fill={muted} />
              </UnitPick>
              <label htmlFor="scale">倍率:</label>
              <ScaleInput id="scale" defaultValue="1.0" />
              <ScaleButton>倍率変更</ScaleButton>
            </Row>
          </ScaleGroup>
          <ElementGroup>
            <GroupTitle>要素設定</GroupTitle>
            <DimLabel><Check type="checkbox" disabled />341要素:SELECTIVE_ESNS要素に設定（平滑化要素） ver5.5以降</DimLabel>
          </ElementGroup>
          <ContentGroup>
            <GroupTitle>mesh内容</GroupTitle>
            <ContentBody>
              <MeshInfo aria-label="mesh内容" readOnly value={meshInfo} />
              <SideButtons>
                <SideButton>NGRPの修正</SideButton>
                <SideButton $tall>{"!EQUATIONで\n部品結合"}</SideButton>
                <SideButton $tall>{"beam要素編集\n  （pin接続）"}</SideButton>
                <SideButton $tall $spaced>{"形状確認\n(paraView)"}</SideButton>
              </SideButtons>
            </ContentBody>
          </ContentGroup>
        </MeshPanel>
      </WorkBody>
    </WorkGroup>
    <Footer>
      <Button>folder開く</Button>
      <Button>temp開く</Button>
      <Button>cnt,mshファイル編集</Button>
      <Button>folderクリア</Button>
      <Spacer />
      <Button>閉じる</Button>
    </Footer>
  </RightPane>
);

const SettingsDialog = () => (
  <Dialog role="dialog" aria-label="設定内容の変更">
    <DialogBar>
      <PythonIcon />
      <DialogTitle>設定内容の変更</DialogTitle>
      <CloseButton type="button" aria-label="閉じる"><CrossIcon color="#111" /></CloseButton>
    </DialogBar>
    <DialogHeading>usingAppファイル内容の編集</DialogHeading>
    <SettingsGroup>
      <GroupTitle>設定内容</GroupTitle>
      {settings.map((s) => (
        <SettingRow key={s.id}>
          <SettingName htmlFor={s.id}>{s.id}:</SettingName>
          {s.combo ? (
            <Combo>
              <ComboSelect id={s.id}><option>{s.value}</option></ComboSelect>
              <ComboArrow><Arrow /></ComboArrow>
            </Combo>
          ) : (
            <TextField id={s.id} defaultValue={s.value} />
          )}
          <SettingNote>{s.note}</SettingNote>
        </SettingRow>
      ))}
    </SettingsGroup>
    <DialogActions>
      <ActionButton type="button">キャンセル</ActionButton>
      <ActionButton type="button">適用</ActionButton>
    </DialogActions>
  </Dialog>
);

const WindowsTaskbar = () => (
  <Taskbar>
    <Weather aria-label="天気">
      <svg width="44" height="46" viewBox="0 0 44 46">
        <circle cx="17" cy="32" r="11" fill="#f09a3a" />
        <circle cx="11" cy="25" r="8" fill="#dce8f4" />
        <path d="M4 20c-4 0-4-6 0-6 0-5 8-6 9-1 5 0 5 7 0 7z" fill="#a9c6f0" />
        <path d="M17 38c-5 0-5-7 0-7 1-5 9-5 10 0 6 0 6 7 1 7z" fill="#a9c2ec" />
        <circle cx="27" cy="12" r="14" fill="#f8fafc" />
        <text x="26" y="17" textAnchor="middle" fontSize="13" fill="#1c1c1c">21°</text>
      </svg>
    </Weather>
    {tasks.map((t) => (
      <TaskButton key={t.name} aria-label={t.name}>
        <Glyph>{t.art}</Glyph>
        {t.run && <RunMark />}
      </TaskButton>
    ))}
    <RunningApps>
      <TaskDivider />
      <TaskButton $active aria-label="EasyISTR">
        <PythonIcon size={28} />
        <RunMark $active />
      </TaskButton>
      <TrayButton $w={64} aria-label="その他">
        <svg width="20" height="4" viewBox="0 0 20 4">
          <circle cx="2" cy="2" r="2" /><circle cx="10" cy="2" r="2" /><circle cx="18" cy="2" r="2" />
        </svg>
      </TrayButton>
      <TaskDivider />
    </RunningApps>
    <Spacer />
    <TrayButton $w={40} aria-label="隠れているインジケーター">
      <svg width="14" height="9" viewBox="0 0 14 9"><path d="M1 8l6-6 6 6" fill="none" stroke="#1c1c1c" strokeWidth="1.800" /></svg>
    </TrayButton>
    <TrayButton $w={40} aria-label="OneDrive">
      <svg width="22" height="22" viewBox="0 0 22 22">
        <path d="M4 15c-4-2-3-7 1-8 3-6 11-5 12 1" fill="#c9ccd0" stroke="#3d4144" strokeWidth="1.400" />
        <circle cx="14" cy="14" r="6" fill="#0a78d4" />
        <path d="M14 13v4M14 10v1.500" stroke="#fff" strokeWidth="1.800" />
      </svg>
    </TrayButton>
    <TrayButton $w={40} aria-label="入力モード">
      <svg width="18" height="20" viewBox="0 0 18 20"><path d="M2 19L9 1l7 18M4.500 13h9" fill="none" stroke="#1c1c1c" strokeWidth="1.500" /></svg>
    </TrayButton>
    <TrayButton $w={38} aria-label="ネットワーク">
      <svg width="20" height="16" viewBox="0 0 20 16">
        <path d="M1 6c5-5 13-5 18 0M4 9c3.500-3.500 8.500-3.500 12 0M7 12c2-2 4-2 6 0" fill="none" stroke="#1c1c1c" strokeWidth="1.400" />
        <circle cx="10" cy="14" r="1.500" fill="#1c1c1c" />
      </svg>
    </TrayButton>
    <TrayButton $w={24} aria-label="音量">
      <svg width="20" height="16" viewBox="0 0 20 16">
        <path d="M1 5.500h3l4-4v13l-4-4H1zM11 5c1.500 2 1.500 4 0 6M13.500 3c2.500 3 2.500 7 0 10M16 1.500c3.500 4 3.500 9 0 13" fill="none" stroke="#1c1c1c" strokeWidth="1.300" />
      </svg>
    </TrayButton>
    <TrayButton $w={34} aria-label="バッテリー">
      <svg width="22" height="18" viewBox="0 0 22 18">
        <rect x="3" y="5" width="15" height="11" rx="3" fill="none" stroke="#1c1c1c" strokeWidth="1.500" />
        <rect x="5" y="8" width="11" height="6" rx="1" fill="#1c1c1c" />
        <path d="M18 9h2v4h-2z" fill="#1c1c1c" />
        <path d="M5 0L1 7h3v4l4-7H5z" fill="#1c1c1c" />
      </svg>
    </TrayButton>
    <Clock>
      23:17:36
      <br />
      2026/10/09
    </Clock>
  </Taskbar>
);

export default function App() {
  return (
    <Desktop>
      <GlobalStyle />
      <TitleBar>
        <PythonIcon />
        <AppTitle>EasyISTR5: DEXCS</AppTitle>
        <WindowButton aria-label="最小化">
          <svg width="12" height="2"><path d="M0 1h12" stroke="#777" /></svg>
        </WindowButton>
        <WindowButton aria-label="元に戻す">
          <svg width="12" height="12" viewBox="0 0 12 12">
            <rect x=".5" y="2.500" width="9" height="9" rx="2" fill="none" stroke="#777" />
            <path d="M3 .5h5c2 0 3.500 1 3.500 3V9" fill="none" stroke="#777" />
          </svg>
        </WindowButton>
        <WindowButton aria-label="終了"><CrossIcon color="#777" /></WindowButton>
      </TitleBar>
      <Workspace>
        <Viewer />
        <Splitter />
        <Analysis />
      </Workspace>
      <WindowsTaskbar />
      <SettingsDialog />
    </Desktop>
  );
}
